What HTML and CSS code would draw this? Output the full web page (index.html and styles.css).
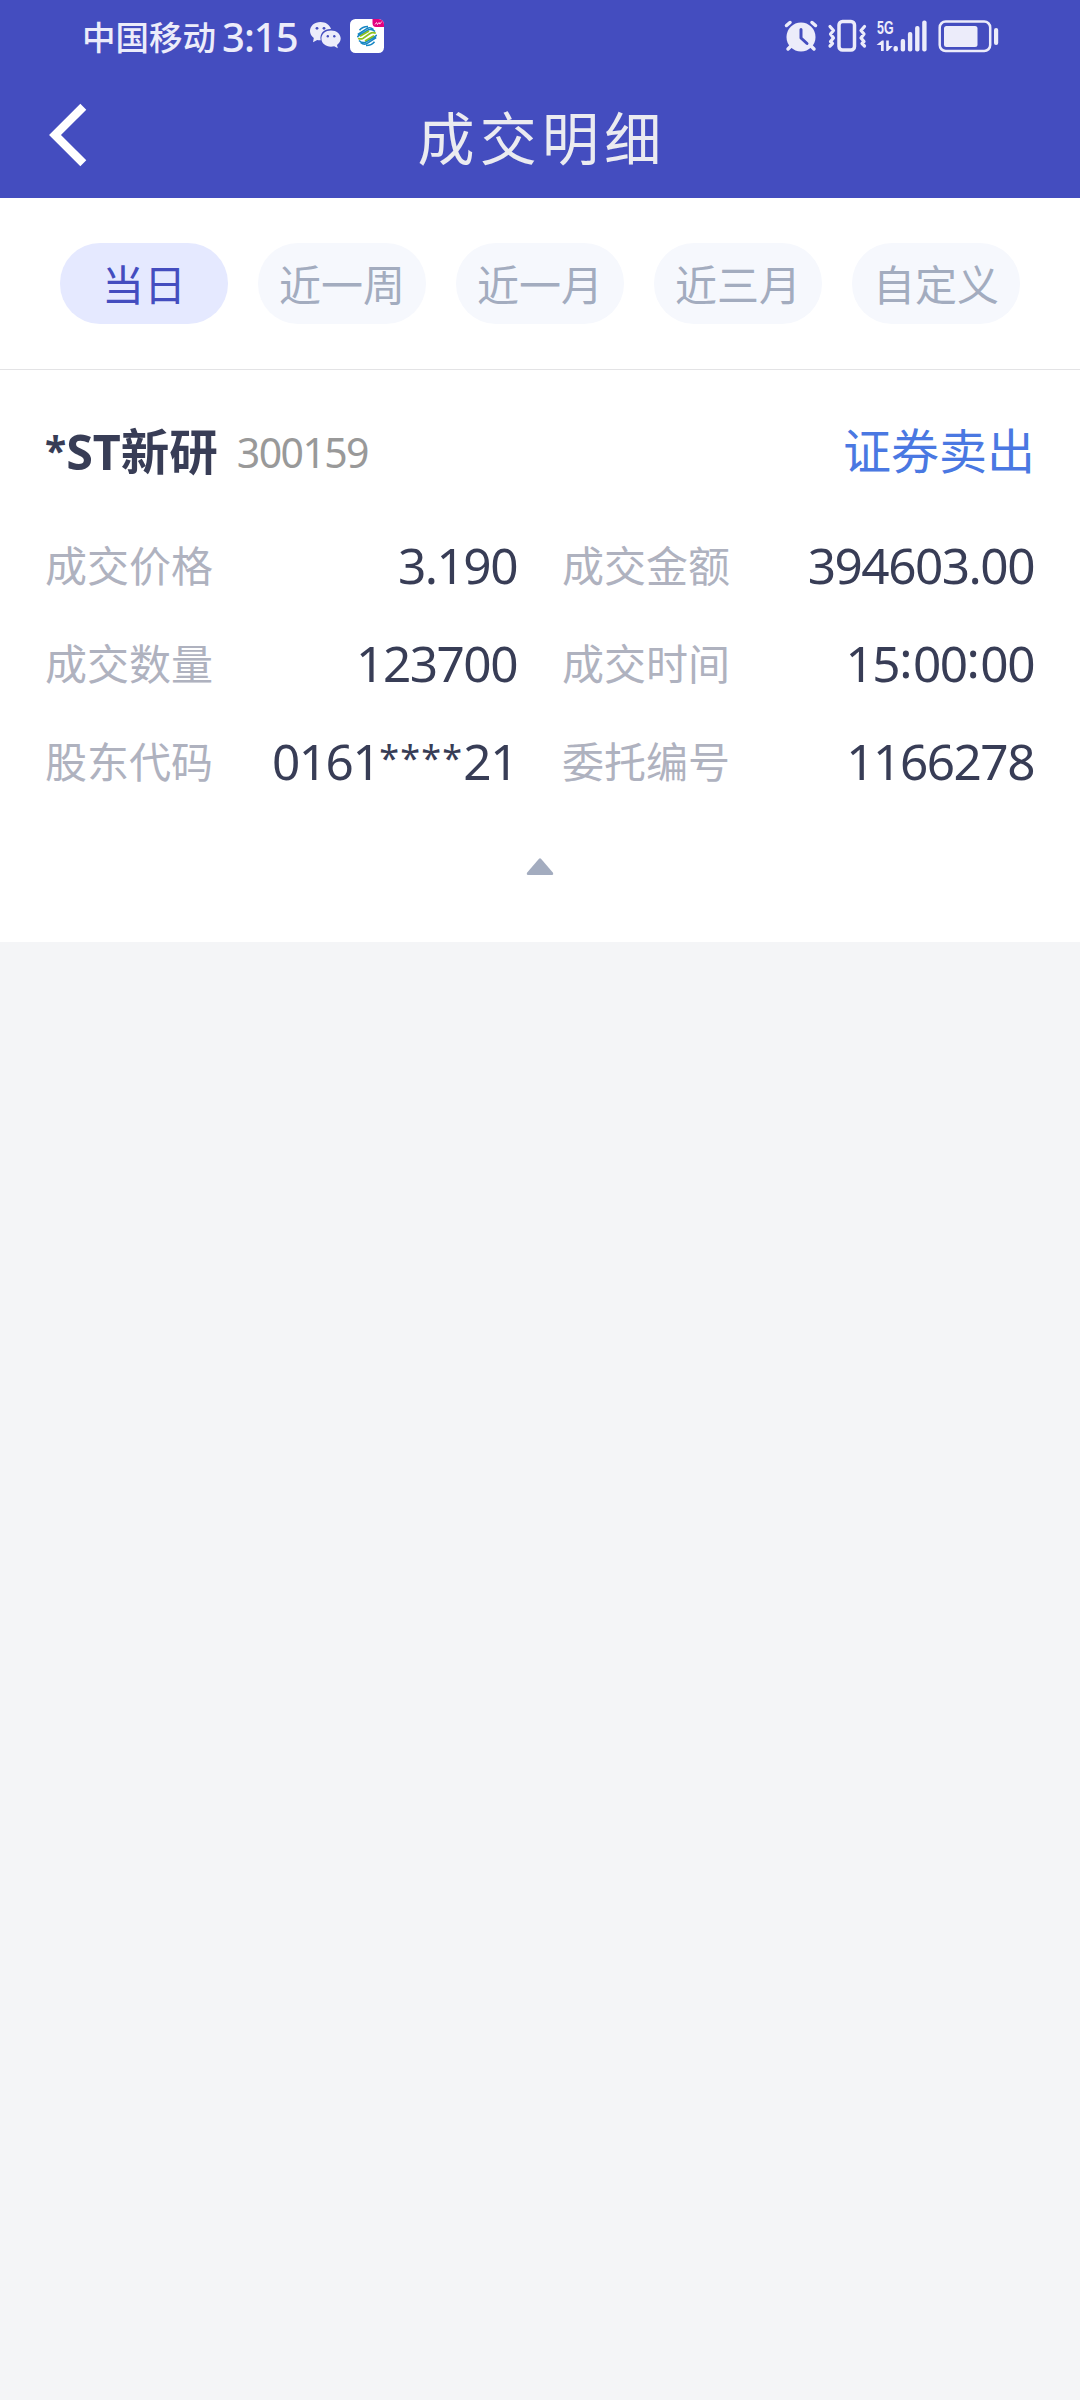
FILE: index.html
```html
<!DOCTYPE html>
<html lang="zh-CN">
<head>
<meta charset="utf-8">
<title>成交明细</title>
<link rel="stylesheet" href="styles.css">
</head>
<body>
<header class="header">
  <div class="status">
    <div class="status-left">
      <span class="carrier">中国移动</span>
      <span class="clock">3:15</span>
      <svg class="wechat" width="34" height="30" viewBox="0 0 34 30">
        <path class="ink" d="M11.5 1C5.500 1 1 4.900 1 10c0 3 1.500 5.300 3.800 7L4 21.200l4.200-2.300c1.100.3 2.300.4 3.500.3C10.200 12.500 15.500 7.800 22 8.100 20.800 3.800 16.700 1 11.500 1z"/>
        <path class="ink" d="M22 9.400c-5.500 0-9.600 3.500-9.600 8.200s4.100 8.200 9.600 8.200c1.100 0 2.200-.2 3.200-.5l3.600 2-.8-3.400c2.300-1.500 3.700-3.700 3.700-6.300 0-4.700-4.200-8.200-9.700-8.200z"/>
        <g class="hole"><circle cx="8" cy="7.300" r="1.400"/><circle cx="15" cy="7.300" r="1.400"/><circle cx="18.800" cy="15.300" r="1.200"/><circle cx="25.300" cy="15.300" r="1.200"/></g>
      </svg>
      <svg class="mobile" width="34" height="34" viewBox="0 0 34 34">
        <rect width="34" height="34" rx="5.500" fill="#fff"/>
        <path d="M22.500 0H28.500A5.500 5.500 0 0 1 34 5.500V8H26q-3.500 0-3.500-4z" fill="#e4007f"/>
        <path d="M25 5.500l1.500-2 1 2 1.500-2 .8 1.600 2-2.600" fill="none" stroke="#fff" stroke-width=".8"/>
        <g fill="none" stroke-width="1.500">
          <path stroke="#1686c4" d="M9.500 11.200Q12.500 7.300 18 7.400M7.800 15.500L17.500 9.200Q20.500 8 23.500 10.500M8 18.200l-.2-.8L18.500 10.800q3.500-1.300 6.500 1.800M24.500 22.800Q21.500 26.700 16 26.600M26.200 18.500L16.500 24.800Q13.500 26 10.500 23.500M26 15.800l.2.800L15.500 23.200q-3.500 1.300-6.500-1.800"/>
          <path stroke="#8dc21f" stroke-width="1.700" d="M8.200 19.200q2.300 1.500 5 0L20 14.500q2.500-1.600 5.800-.2M10 17.300l9-5.300M15 22l9-5.300"/>
        </g>
      </svg>
    </div>
    <svg class="status-right" width="216" height="34" viewBox="784 19 216 34">
      <g class="ink">
        <circle cx="801" cy="37" r="14.500"/>
        <path class="line" stroke-width="3.500" d="M786.500 25.500l3.500-3M815.500 25.500l-3.500-3M791 46l-3 3M811 46l3 3"/>
        <path class="line cut" stroke-width="3" d="M801 29.500v8.500l6 5.500"/>
        <rect class="line hollow" x="839" y="21.500" width="15.500" height="28.500" rx="3.500" stroke-width="3.500"/>
        <path class="line hollow" stroke-width="3.200" d="M830 26.500l3.500 4-3 3.500 3 4-3 3.500 2 2-2.500 2.500M864.500 26.500l-3.500 4 3 3.500-3 4 3 3.500-2 2 2.500 2.500"/>
        <text class="network" x="877" y="34" textLength="16.500" lengthAdjust="spacingAndGlyphs">5G</text>
        <path d="M876.500 45l5.500-4.500h1.700V51h-2.700v-6zM886.200 40.500h2.600V46h4l-5 5h-1.600z"/>
        <rect x="893.500" y="46" width="4.400" height="5.400" rx="2"/>
        <rect x="900.700" y="39" width="4.400" height="12.400" rx="2"/>
        <rect x="907.900" y="32" width="4.400" height="19.400" rx="2"/>
        <rect x="915.100" y="26" width="4.400" height="25.400" rx="2"/>
        <rect x="922.200" y="20.500" width="4.400" height="30.900" rx="2"/>
        <rect class="line hollow" x="939.700" y="21.500" width="50.500" height="29.500" rx="6" stroke-width="2.500"/>
        <rect x="944" y="26" width="33.500" height="21" rx="2.500"/>
        <rect x="994" y="28" width="4.200" height="17" rx="2.100"/>
      </g>
    </svg>
  </div>
  <div class="titlebar">
    <svg class="back" width="44" height="66" viewBox="0 0 44 66"><path d="M37.300 4.700L9 33l28.300 28.300"/></svg>
    <h1 class="title">成交明细</h1>
  </div>
</header>
<nav class="tabs">
  <span class="tab active">当日</span>
  <span class="tab">近一周</span>
  <span class="tab">近一月</span>
  <span class="tab">近三月</span>
  <span class="tab">自定义</span>
</nav>
<section class="card">
  <div class="card-head">
    <span class="name"><span class="star">*</span>ST新研</span>
    <span class="code">300159</span>
    <span class="side">证券卖出</span>
  </div>
  <dl class="details">
    <div class="field"><dt>成交价格</dt><dd>3.190</dd></div>
    <div class="field"><dt>成交金额</dt><dd>394603.00</dd></div>
    <div class="field"><dt>成交数量</dt><dd>123700</dd></div>
    <div class="field"><dt>成交时间</dt><dd>15<span class="colon">:</span>00<span class="colon">:</span>00</dd></div>
    <div class="field"><dt>股东代码</dt><dd>0161<span class="mask">****</span>21</dd></div>
    <div class="field"><dt>委托编号</dt><dd>1166278</dd></div>
  </dl>
  <svg class="collapse" width="28" height="18" viewBox="0 0 28 18"><path d="M13 .8q1-1 2 0L26.800 14.500q1.200 2.500-1 2.500H2.200q-2.200 0-1-2.500z"/></svg>
</section>
</body>
</html>
```
FILE: styles.css
```css
* { box-sizing: border-box; margin: 0; padding: 0; }
body {
  width: 1080px;
  min-height: 2400px;
  background: #f4f5f7;
  font-family: "Noto Sans", "Noto Sans CJK SC", sans-serif;
  color: #383d56;
}
svg { display: block; flex: none; }
.header { height: 198px; background: #444dbf; }
.status {
  height: 72px;
  padding: 0 80px 0 82px;
  display: flex;
  justify-content: space-between;
  align-items: center;
}
.status-left { display: flex; align-items: center; color: #ececfa; line-height: 72px; font-weight: 500; }
.carrier { width: 140px; font-size: 33.5px; white-space: nowrap; padding-top: 2px; }
.clock { width: 87px; font-size: 40px; letter-spacing: -1px; padding-top: 2px; }
.mobile { margin-left: 7px; }
.ink { fill: #ececfa; }
.hole { fill: #444dbf; }
.line { stroke: #ececfa; stroke-linecap: round; stroke-linejoin: round; }
.hollow { fill: none; }
.cut { fill: none; stroke: #444dbf; }
.network { font: 700 18px "Liberation Sans", sans-serif; }
.titlebar { height: 126px; display: grid; grid-template-columns: 90px 1fr 90px; align-items: center; }
.back { margin: 0 0 0 46px; }
.back path { fill: none; stroke: #fff; stroke-width: 8.4; }
.title {
  padding: 6px 0 0 4px;
  font-size: 57px;
  font-weight: 400;
  line-height: 80px;
  letter-spacing: 5.300px;
  text-align: center;
  color: #ebebf0;
}
.tabs {
  height: 172px;
  padding: 45px 60px 0;
  display: flex;
  gap: 30px;
  background: #fff;
  border-bottom: 1px solid #e3e3e5;
}
.tab {
  flex: 1;
  height: 81px;
  border-radius: 40px;
  background: #f6f8fd;
  color: #a3acbf;
  font-size: 42px;
  line-height: 84px;
  text-align: center;
}
.active { background: #e5e9ff; color: #444dbf; }
.card { height: 572px; padding: 36px 45px 0; background: #fff; }
.card-head { height: 90px; display: flex; align-items: center; line-height: 88px; }
.name { font-size: 48.500px; font-weight: 700; }
.star { font-size: 39px; line-height: 0; vertical-align: 5px; }
.code { margin-left: 19px; padding-top: 2px; font-size: 41px; letter-spacing: -1.600px; color: #999; }
.side { margin-left: auto; font-size: 48px; color: #4a78e2; }
.details { padding-top: 21px; display: grid; grid-template-columns: 472px 472px; column-gap: 45px; }
.field { height: 98px; display: flex; justify-content: space-between; align-items: center; line-height: 98px; }
.field dt { font-size: 42px; color: #afb2bf; }
.field dd { padding-bottom: 2px; font-size: 49.500px; letter-spacing: -1.500px; line-height: 96px; }
.mask { font-size: 36px; letter-spacing: 1.200px; line-height: 0; vertical-align: 9px; }
.colon { letter-spacing: .5px; line-height: 0; vertical-align: 4px; }
.collapse { margin: 47px auto 0; fill: #a3acbf; }
```
